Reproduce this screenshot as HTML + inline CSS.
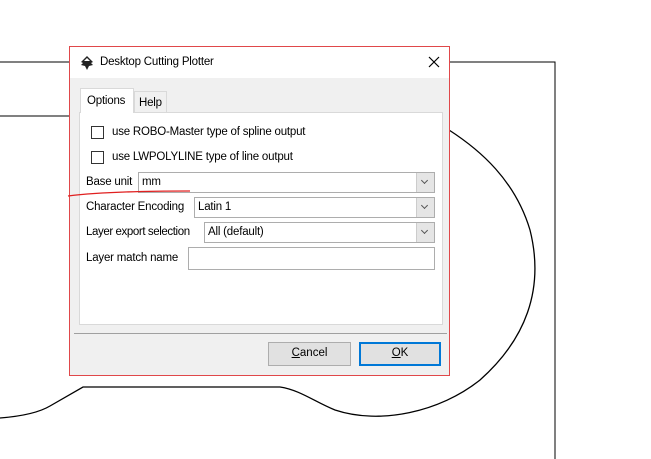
<!DOCTYPE html><html><head><style>
body{margin:0;width:651px;height:459px;background:#fff;position:relative;overflow:hidden;font-family:"Liberation Sans",sans-serif;font-size:11.5px;color:#000}
.a{position:absolute}
.dlg{left:69px;top:46px;width:379px;height:328px;border:1px solid #e0484a;background:#f0f0f0}
.tb{left:0;top:0;width:379px;height:31px;background:#fff}
.box{background:#fff;border:1px solid #adadad;box-sizing:border-box;letter-spacing:-0.2px}
.cb{width:13px;height:13px;border:1px solid #333;background:#fff;box-sizing:border-box}
.arr{position:absolute;right:0;top:0;bottom:0;width:17px;background:#e5e5e5;border-left:1px solid #ccc}
.arr:after{content:"";position:absolute;left:5px;top:5px;width:4px;height:4px;border-right:1px solid #555;border-bottom:1px solid #555;transform:rotate(45deg)}
.btn{background:#e1e1e1;border:1px solid #adadad;box-sizing:border-box;text-align:center;line-height:21px}
.l{letter-spacing:-0.2px}
</style></head><body>
<svg class="a" style="left:0;top:0" width="651" height="459">
<path d="M0 62H555V459" fill="none" stroke="#000" stroke-width="1"/>
<path d="M0 116H69" stroke="#000" fill="none"/>
<path d="M0 418 C25 416 40 412 50 406 L83 387 L280 387 C300 390 315 402 335 410 C380 425 440 412 480 380 C525 340 545 290 530 230 C515 180 480 150 449 130" fill="none" stroke="#000" stroke-width="1.3"/>
</svg>
<div class="a dlg">
 <div class="a tb"></div>
 <svg class="a" style="left:9px;top:8px" width="16" height="16"><path d="M8 1L2 7 4 8 2 10 6 11 8 15 10 11 14 10 12 8 14 7Z" fill="#222"/><path d="M8 3L5 6 11 6Z" fill="#fff"/></svg>
 <div class="a l" style="left:30px;top:9px">Desktop Cutting Plotter</div>
 <svg class="a" style="left:358px;top:9px" width="12" height="12"><path d="M1 1L11 11M11 1L1 11" stroke="#000" stroke-width="1.2"/></svg>
 <div class="a box" style="left:9px;top:65px;width:364px;height:213px;border-color:#d9d9d9"></div>
 <div class="a l" style="left:10px;top:41px;width:54px;height:25px;background:#fff;border:1px solid #d9d9d9;border-bottom:none;box-sizing:border-box;padding:6px 0 0 6px">Options</div>
 <div class="a l" style="left:64px;top:44px;width:33px;height:21px;border:1px solid #d9d9d9;border-bottom:none;box-sizing:border-box;padding:5px 0 0 4px">Help</div>
 <div class="a cb" style="left:21px;top:79px"></div><div class="a l" style="left:42px;top:79px">use ROBO-Master type of spline output</div>
 <div class="a cb" style="left:21px;top:104px"></div><div class="a l" style="left:42px;top:104px">use LWPOLYLINE type of line output</div>
 <div class="a l" style="left:16px;top:129px">Base unit</div>
 <div class="a box" style="left:68px;top:125px;width:297px;height:21px;padding:3px 3px">mm<div class="arr"></div></div>
 <div class="a l" style="left:16px;top:154px">Character Encoding</div>
 <div class="a box" style="left:124px;top:150px;width:241px;height:21px;padding:3px 3px">Latin 1<div class="arr"></div></div>
 <div class="a l" style="left:16px;top:179px;letter-spacing:-0.4px">Layer export selection</div>
 <div class="a box" style="left:134px;top:175px;width:231px;height:21px;padding:3px 3px">All (default)<div class="arr"></div></div>
 <div class="a l" style="left:16px;top:205px">Layer match name</div>
 <div class="a box" style="left:118px;top:200px;width:247px;height:23px"></div>
 <div class="a" style="left:4px;top:286px;width:373px;height:1px;background:#a0a0a0"></div>
 <div class="a btn" style="left:198px;top:295px;width:83px;height:24px"><u>C</u>ancel</div>
 <div class="a btn" style="left:289px;top:295px;width:82px;height:24px;border:2px solid #0078d7;line-height:19px"><u>O</u>K</div>
</div>
<svg class="a" style="left:0;top:0" width="651" height="459"><path d="M68 196 C100 192 150 191 190 191" fill="none" stroke="#e02020" stroke-width="1.3"/></svg>
</body></html>
